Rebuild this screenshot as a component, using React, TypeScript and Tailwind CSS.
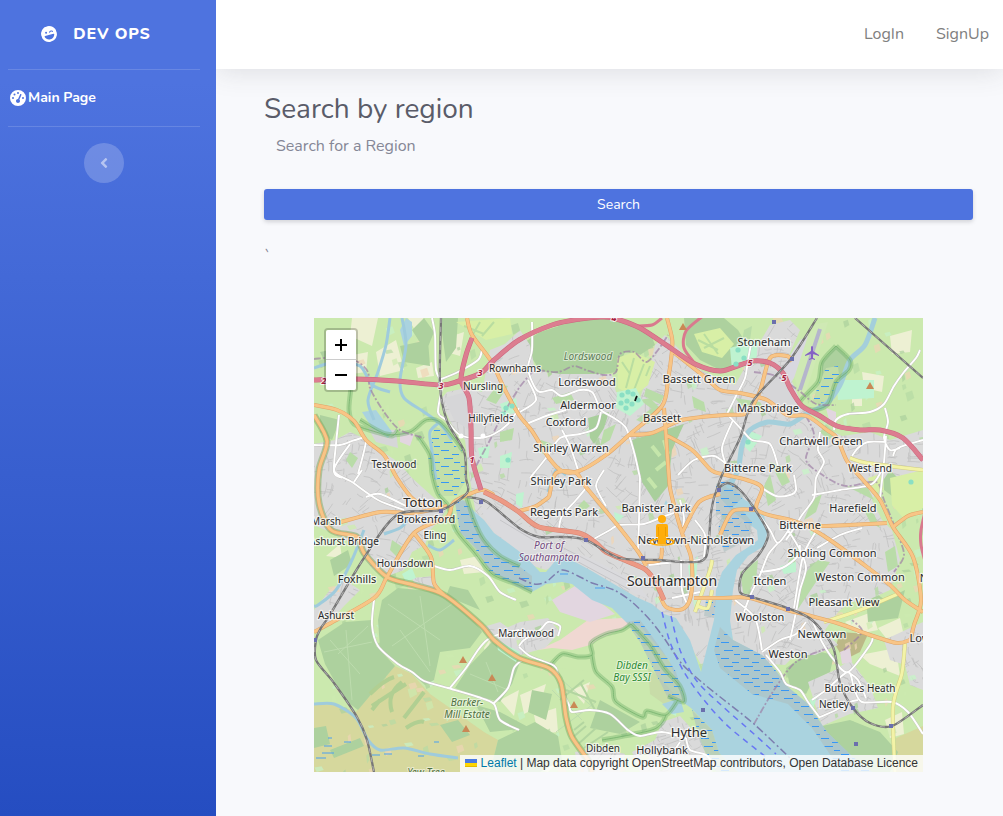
import React from "react";
import { FaAngleLeft } from "react-icons/fa";
import { FaFaceLaughWink, FaGaugeHigh } from "react-icons/fa6";

type Point = [number, number];

const parse = (s: string): Point[] =>
  s.split(" ").map((p) => p.split(",").map(Number) as Point);

const poly = (s: string) => "M" + s.split(" ").join("L") + "Z";

/* Turns a list of points into a smooth open curve. */
const curve = (s: string) => {
  const p = parse(s);
  let d = `M${p[0][0]},${p[0][1]}`;
  for (let i = 0; i < p.length - 1; i++) {
    const a = p[i - 1] ?? p[i];
    const b = p[i];
    const c = p[i + 1];
    const e = p[i + 2] ?? c;
    d += `C${b[0] + (c[0] - a[0]) / 7},${b[1] + (c[1] - a[1]) / 7} ${c[0] - (e[0] - b[0]) / 7},${c[1] - (e[1] - b[1]) / 7} ${c[0]},${c[1]}`;
  }
  return d;
};

const random = (seed: number) => () => {
  seed = (seed * 16807) % 2147483647;
  return seed / 2147483647;
};

const urban = [
  "314,444 335,440 350,432 368,440 380,450 398,462 412,478 432,496 447,508 440,520 430,530 425,545 412,552 404,570 385,577 372,568 355,545 330,532 314,525",
  "314,610 330,590 345,580 360,590 345,605 327,625 314,630",
  "440,400 447,392 466,388 482,392 490,350 505,344 520,330 530,345 535,370 560,374 612,374 616,392 640,398 648,375 655,345 665,335 680,350 700,370 735,385 748,362 770,325 790,320 800,330 785,365 800,400 812,418 830,430 842,436 870,432 890,440 923,430 923,475 900,480 890,470 880,485 872,500 882,520 892,530 900,560 890,590 868,600 850,602 838,612 825,630 838,645 815,655 795,655 785,665 770,664 750,650 733,640 728,618 712,680 703,668 690,645 676,620 660,618 645,608 600,580 560,562 546,570 520,562 500,555 485,542 476,515 470,480 465,440 452,425",
  "808,682 835,670 850,660 870,686 878,708 850,714 822,726",
  "655,740 662,722 680,716 700,738 712,772 640,772 632,752",
  "497,632 520,622 548,618 560,632 545,648 520,655 502,645",
  "480,628 500,622 520,636 510,645 495,642",
  "575,752 600,748 625,754 620,772 578,772",
  "884,640 923,622 923,690 910,685 905,665 890,660",
  "412,578 434,576 440,592 416,588",
];

const woods = [
  "519,346 540,332 585,318 618,318 650,332 655,345 640,355 625,352 617,372 590,376 560,374 542,374 530,355",
  "684,318 724,318 738,330 750,350 745,362 720,370 700,360 686,345",
  "632,440 684,424 672,450 668,486 655,502 642,482",
  "588,418 609,412 604,428 594,444 590,438",
  "318,640 345,622 372,620 376,646 395,666 358,710 345,700 325,664",
  "378,620 382,600 398,588 440,592 468,612 482,632 470,648 440,652 434,680 425,685 410,672 395,662 380,648",
  "492,642 520,662 512,684 500,702 476,696 455,688 470,665",
  "400,346 428,340 430,366 404,362",
  "412,330 424,318 434,332 426,352",
  "320,352 340,348 350,366 330,372",
  "458,318 440,318 446,362 456,348",
  "884,470 923,476 920,494 900,502 884,490",
  "822,362 836,346 850,360 840,385 822,388",
  "330,560 348,550 352,564 334,576",
  "480,610 468,590 450,586 446,596",
  "786,668 812,650 834,655 830,672 812,682 806,694 790,686",
  "800,714 822,726 850,720 880,732 898,752 890,772 864,772 830,736",
  "498,740 535,722 558,736 562,760 540,772 490,772",
  "440,725 458,720 470,735 452,742",
  "314,728 326,726 330,744 314,748",
  "330,750 360,738 364,746 334,758",
  "532,690 552,694 546,720 528,712",
  "865,585 885,600 905,590 898,618 868,622",
  "600,700 640,722 620,734 590,728",
  "320,415 340,420 332,440 320,432",
  "476,705 500,712 530,728 490,732",
];

const urbanGreens = [
  "636,420 652,408 660,412 648,424",
  "640,400 650,398 662,410 656,412",
  "744,330 752,326 750,340 742,342",
  "735,398 760,402 766,412 742,406",
  "770,462 782,466 790,482 782,486",
  "770,474 776,500 768,506 764,486",
  "804,520 812,500 822,494 816,512",
  "800,545 796,560 790,572 788,562",
  "806,572 818,560 830,562 816,582 804,600 796,612 800,590",
  "740,572 758,560 756,580 744,598",
  "846,486 868,488 874,500 862,494",
  "862,506 874,514 880,528 870,522",
  "552,398 570,392 574,400 556,404",
  "604,430 616,424 610,440 600,446",
  "541,440 552,444 546,456 538,450",
  "646,388 664,396 660,404 644,396",
  "692,396 704,402 706,412 694,408",
  "578,506 584,500 590,506 582,512",
  "486,400 498,384 508,386 496,404",
  "500,432 514,428 512,440 500,442",
  "392,540 404,548 398,558 390,550",
  "350,452 358,458 352,468 346,460",
  "654,576 660,578 658,592 654,590",
  "885,552 895,546 898,566 888,572",
  "820,432 826,424 836,434 828,440",
];

const fields = [
  "352,318 378,318 372,346 350,336",
  "376,352 396,340 404,370 380,376",
  "408,318 424,318 416,332",
  "348,356 368,352 366,372 352,374",
  "446,338 464,332 460,356 446,352",
  "520,695 546,684 540,706 524,714",
  "534,715 556,708 558,732 538,734",
  "500,700 519,690 514,716",
  "572,690 590,682 584,704",
  "460,560 478,556 484,572 464,574",
  "878,628 900,618 904,636 886,638",
  "845,622 872,612 878,630 858,634",
  "860,655 896,648 900,676 870,664",
  "885,720 902,712 904,734 890,738",
  "852,398 862,392 862,406 852,406",
  "484,648 492,636 486,654",
  "862,372 884,376 882,392 864,388",
  "890,336 912,330 910,352 892,354",
  "326,556 340,544 342,558",
  "520,766 545,748 560,760 548,772",
  "416,368 432,362 434,376 418,378",
  "630,685 648,690 640,700 626,696",
];

const brightGreen = [
  "617,358 634,352 655,362 648,385 634,396 618,388",
  "694,334 720,328 734,344 722,358 702,352",
  "890,478 923,470 923,508 905,520 892,505",
  "868,478 880,474 884,490 872,494",
  "456,322 510,318 512,334 486,340",
];

const mint = [
  "617,392 636,388 644,404 630,416 616,408",
  "730,348 758,340 756,364 732,370",
  "836,380 874,380 874,398 838,400",
  "500,404 516,398 518,412 504,416",
  "478,448 490,446 488,458 480,458",
  "500,456 512,452 510,468 500,468",
  "748,430 762,436 750,452 742,444",
  "496,640 520,652 516,662 498,650",
  "780,566 796,562 796,572 784,574",
  "614,512 624,516 616,524",
  "402,574 412,568 416,578 406,582",
  "516,494 524,492 522,508 516,504",
  "810,700 818,694 812,712",
  "668,712 678,700 676,716",
  "688,566 698,556 696,578 690,580",
];

const industrial = [
  "552,600 575,586 605,606 615,614 590,622 560,612",
  "836,412 826,408 830,424 836,422",
  "400,432 414,434 410,446 400,442",
  "840,652 850,648 852,662 842,664",
];

const commercial = [
  "444,398 466,392 469,430 454,420",
  "368,428 396,430 398,448 376,442",
  "762,370 782,372 798,398 786,412 764,404",
];

const water = [
  "476,513 484,520 494,533 508,543 524,555 540,572 546,572 556,560 566,557 590,570 636,597 652,604 664,614 676,618 690,640 701,672 714,620 716,590 722,572 736,555 750,546 758,540 757,530 745,521 733,512 720,498 722,484 733,488 745,500 757,506 764,516 768,530 764,546 748,556 737,570 733,590 730,620 733,640 762,655 777,672 788,687 807,703 827,732 853,757 872,772 738,772 719,753 712,730 691,708 684,703 669,660 640,626 626,622 612,608 592,600 572,584 562,582 546,584 532,592 516,586 490,570 476,548 460,532 455,502 463,500",
  "406,318 412,322 412,336 404,346 400,330",
  "362,412 376,410 392,432 388,438 372,428",
  "662,704 680,698 684,712 672,714",
  "668,504 664,505 666,500",
];

const marsh = [
  "455,502 466,500 474,520 484,540 496,556 519,566 532,576 532,592 516,586 490,572 476,550 460,532",
  "434,426 446,432 454,445 464,452 466,480 456,496 440,496 428,462",
  "626,622 640,620 662,650 676,672 685,702 668,698 654,670 640,642",
  "692,710 712,730 719,753 738,772 716,772 700,742",
  "720,627 733,640 762,655 777,672 788,687 807,703 827,732 853,757 872,772 842,772 812,728 788,704 752,694 720,668 714,650",
  "724,505 742,510 752,522 750,538 736,546 724,552 718,530",
  "716,484 732,478 744,496 732,508 716,516",
  "826,368 838,366 840,384 830,394 826,402 812,404 818,386",
  "706,600 716,598 714,618 704,616",
];

const whiteRoads = [
  "432,318 435,335 436,370 442,385 438,412 446,420 460,435 480,438 494,434 508,424 519,408",
  "439,380 458,372 478,360 482,350",
  "314,445 340,445 355,440 366,440 358,474",
  "339,415 336,444 334,472 342,478",
  "350,444 334,470 352,482 378,500 404,510",
  "366,497 380,494 406,506",
  "354,482 362,470",
  "434,566 450,570 470,566 488,576 500,592 516,600",
  "374,600 372,625 378,646 398,664 412,672 424,681 448,688 478,697 494,704 500,720 519,730",
  "450,688 466,668 478,650 487,640 500,634 519,630",
  "494,703 508,688 514,668 522,660",
  "519,646 524,640 540,630 548,622 560,626 558,636",
  "519,647 530,656 548,663 556,668 562,690 569,705 572,712 590,710 610,714 628,730 640,736 662,732 686,738",
  "532,322 532,350 528,368 534,386 540,392 552,390 562,396 580,390 592,392 598,404 602,411 614,418 626,428 634,452 640,478",
  "520,412 536,400 528,380",
  "524,425 546,416 566,410",
  "601,412 596,428 580,434 560,438 546,458 530,478",
  "562,430 570,446 578,470",
  "640,478 639,520 638,550",
  "559,528 562,516 576,500 586,488",
  "592,540 610,530 619,525 644,524 665,516 676,512",
  "678,475 694,460 714,456 726,464",
  "695,520 705,535 704,557",
  "680,500 684,518 682,534",
  "604,470 596,486 606,506",
  "649,565 676,562 700,560",
  "681,560 682,590 688,606",
  "672,598 700,592",
  "751,344 748,360 745,378 736,396 727,414",
  "727,414 742,430 752,440 770,444 778,466",
  "733,420 722,448 728,470",
  "834,430 836,420 848,414 870,412 884,404 894,386 904,372 916,358 920,350",
  "885,408 888,422 884,438 890,450 900,448",
  "852,456 858,448 868,442 886,442",
  "893,456 898,448 923,440",
  "820,432 818,450 824,462 816,478 814,498 802,515 794,528 786,540",
  "812,495 840,490 872,484 884,465",
  "762,488 776,496 790,495 796,490 794,475",
  "757,512 770,530 778,543 790,528",
  "778,543 768,555 760,575 750,596 744,612",
  "760,572 782,568 798,556 800,545",
  "788,530 800,550 806,568 800,590 796,612 790,640",
  "818,528 808,545 802,560 794,608",
  "817,548 840,535 862,528",
  "886,436 884,462 880,498",
  "735,600 755,618 762,650",
  "762,652 780,640 796,634 806,622",
  "766,655 780,672 786,684 800,690 808,702 820,718",
  "812,620 822,642 834,660 848,672 870,645 873,636",
  "812,700 826,690 848,672 854,688 862,702 892,702 908,712 923,734",
  "820,717 836,710 850,702 858,700",
  "848,672 858,680 866,698",
  "686,738 690,750 706,755 716,768",
  "680,742 668,760",
];

const primaryRoads = [
  "467,318 472,335 491,361 504,388 519,415 532,431 549,458 562,471 579,471 606,455 629,435 662,406 668,380 672,351 672,338 667,318",
  "629,435 652,433 682,420 724,415 747,413 760,391 770,358 787,356 792,361",
  "664,408 666,435 669,478 671,493 682,533 691,557 692,587 688,604 679,610 666,607 660,596",
  "666,435 692,450 711,470 722,474 747,480 762,488 757,510 790,520 805,525 830,540 867,567 890,585 905,600 923,612",
  "672,351 706,378 720,390 740,393 767,400 787,415 807,416 827,430 837,438 847,461 863,480 880,500 893,527 913,557 921,600 914,625 910,642",
  "893,527 908,516 923,512",
  "803,524 820,526 887,523",
  "682,533 699,502 720,494",
  "720,535 733,511 757,510",
  "694,598 720,598 750,598 787,610 807,615 840,624 870,635 897,643 910,640",
  "549,497 556,473 576,473 586,487 619,527 639,553 646,566",
  "519,511 536,506 549,497",
  "314,405 337,410 354,421 366,440 384,455 397,478 411,497 424,507",
  "314,415 327,441 319,470 319,503 331,530 357,537 364,553 387,577 414,585 444,595 481,625 494,640 519,658 549,668 561,683 566,717 572,737 588,760 592,772",
  "314,632 327,625 374,598 387,577 414,533 447,517 454,502 481,490 494,495",
  "341,522 381,512 414,513 447,506",
  "414,533 431,557 434,583 444,595",
  "646,562 660,560 662,548",
];

const secondaryRoads = [
  "905,643 902,673 893,707 895,772",
  "824,622 860,610 900,593",
  "850,458 867,463 923,470",
  "695,612 710,570 712,560",
  "697,606 708,608 712,590",
];

const trunkRoads = [
  "484,492 502,501 519,512 539,527 579,533 596,543 606,552 629,562 646,570 656,583 664,600",
];

const motorways = [
  "314,380 354,379 397,381 441,385 459,381 481,373 494,360 519,340 552,325 580,319 600,317 613,318 640,328 672,349 695,364 720,371 740,365 753,361 770,363 783,373 790,388 802,406 820,416 837,426 860,430 880,430 903,438 923,460",
  "472,338 466,355 461,380 469,398 471,428 472,458 481,490",
];

const motorwayLinks = [
  "703,316 686,331 684,348 696,365",
  "662,318 652,325 636,326",
  "926,508 921,530 921,545 926,565",
];

const railways = [
  "441,318 440,385 447,421 464,451 466,478 467,493 441,510 397,515 364,558 331,613 321,628 316,640 316,660 334,683 357,717 367,740 374,772",
  "467,497 487,502 519,528 539,537 562,537 586,540 619,558 659,560 686,562 706,557 711,513 716,492 727,483 740,490 754,508 767,530 767,540 758,556 742,574 740,592 752,597 787,608 812,620 833,647 840,683 853,708 870,723 892,726 923,705",
  "817,318 790,360 753,401 740,438 722,475 716,492",
  "855,318 923,378",
];

const streams = [
  "390,318 386,345 378,372 368,400 374,420",
  "402,318 406,345 400,380 404,398 424,412 440,424 452,440",
  "314,368 335,362 360,366 372,385 390,392",
  "440,422 430,432 432,452 436,480",
  "875,318 865,345 850,360 840,385 826,404 806,414 790,424 768,422 750,430 742,446 738,470 728,488",
  "314,704 334,704 356,718 368,740 380,750 404,748 430,754 458,758",
  "364,530 352,560 336,590 318,605 314,606",
  "384,534 400,528 408,520",
  "428,545 440,550 454,540",
  "566,475 556,470 548,492",
];

const reserves = [
  "351,388 349,410 354,424 376,432 392,436 398,430",
  "360,420 386,434 410,432 426,420 440,422 454,438 464,452",
  "418,436 430,455 432,474 438,494 448,506 456,530 474,552 492,574 516,584 532,592",
  "466,495 474,520 484,540 500,556 520,566",
  "549,667 562,654 578,657 592,655 591,643 606,634 622,630 631,624",
  "631,624 650,645 664,668 680,686 684,702 668,696",
  "592,655 596,672 612,687 616,702 642,717 647,711 666,715 678,700",
  "666,715 662,723 652,730 619,737 602,740",
  "836,346 822,362 818,382 800,402 812,410 828,404 836,382 849,370 850,360 836,346",
];

const borders = [
  "314,359 340,357 358,362 368,372 370,388 384,412 400,430 424,438",
  "538,370 558,372 574,366 586,370 604,375 616,372 620,354 634,352 646,362 658,350 668,335",
  "476,466 490,440 500,420 519,388 536,368",
  "754,372 776,376 798,390 816,404 836,405",
  "806,416 814,435 806,460 824,476 846,486 876,482 884,500 896,530 904,555 894,572",
  "844,650 862,632 852,620",
  "754,724 774,690 796,662 828,648",
];

const labels: [string, number, number, number][] = [
  ["Stoneham", 764, 346, 11],
  ["Rownhams", 515, 372, 10],
  ["Nursling", 483, 390, 10],
  ["Lordswood", 587, 386, 11],
  ["Bassett Green", 699, 383, 11],
  ["Aldermoor", 588, 409, 11],
  ["Coxford", 566, 426, 11],
  ["Bassett", 662, 422, 11],
  ["Mansbridge", 768, 412, 11],
  ["Hillyfields", 491, 422, 10],
  ["Chartwell Green", 821, 445, 11],
  ["Shirley Warren", 571, 452, 11],
  ["Bitterne Park", 758, 472, 11],
  ["West End", 870, 472, 10],
  ["Testwood", 394, 468, 10],
  ["Shirley Park", 561, 485, 11],
  ["Regents Park", 564, 516, 11],
  ["Totton", 423, 507, 13],
  ["Brokenford", 426, 523, 11],
  ["Banister Park", 656, 512, 11],
  ["Harefield", 853, 512, 11],
  ["Marsh", 326, 525, 10],
  ["Bitterne", 800, 529, 11],
  ["Eling", 435, 539, 10],
  ["Ashurst Bridge", 344, 545, 10],
  ["Newtown-Nicholstown", 696, 544, 11],
  ["Sholing Common", 832, 557, 11],
  ["Hounsdown", 405, 567, 10],
  ["Foxhills", 357, 583, 11],
  ["Southampton", 672, 586, 14],
  ["Itchen", 770, 585, 11],
  ["Weston Common", 860, 581, 11],
  ["Pleasant View", 844, 606, 11],
  ["Ashurst", 336, 619, 10],
  ["Woolston", 760, 621, 11],
  ["Marchwood", 526, 637, 10],
  ["Newtown", 822, 638, 11],
  ["Weston", 788, 658, 11],
  ["Butlocks Heath", 860, 692, 10],
  ["Netley", 834, 708, 10],
  ["Hythe", 689, 737, 13],
  ["Dibden", 603, 752, 10],
  ["Hollybank", 662, 754, 11],
  ["Low", 920, 642, 11],
  ["N", 924, 582, 11],
];

const areaLabels: [string, number, number, string][] = [
  ["Lordswood", 588, 360, "#5c7a55"],
  ["Port of", 549, 549, "#734a7d"],
  ["Southampton", 549, 561, "#734a7d"],
  ["Dibden", 632, 669, "#2c8a34"],
  ["Bay SSSI", 632, 681, "#2c8a34"],
  ["Barker-", 467, 706, "#4f7042"],
  ["Mill Estate", 467, 718, "#4f7042"],
  ["Yew Tree", 426, 776, "#4f7042"],
];

const shields: [string, number, number][] = [
  ["2", 324, 384],
  ["3", 441, 389],
  ["3", 480, 376],
  ["4", 614, 321],
  ["5", 750, 366],
  ["5", 784, 381],
  ["1", 472, 463],
];

const peaks = ["683,326", "870,385", "463,659", "492,677", "466,728", "574,704"];
const stations = ["441,511", "481,502", "586,540", "643,558", "719,490", "751,509", "752,597", "788,609", "774,322", "792,359", "703,710", "853,708", "891,726", "856,744", "315,640"];

const pitches: Point[] = [
  [622, 395], [628, 392], [633, 394], [621, 403], [627, 401], [632, 404], [638, 400], [626, 408],
  [911, 482], [738, 350], [744, 358], [736, 364], [506, 408], [512, 406], [503, 414], [508, 460], [748, 442],
];

const streetGrid = (() => {
  const r = random(71);
  let d = "";
  for (let i = 0; i < 2800; i++) {
    const x = 314 + r() * 609;
    const y = 318 + r() * 454;
    const tilt = Math.sin(x / 63) + Math.cos(y / 47) + (r() > 0.5 ? Math.PI / 2 : 0);
    const len = 5 + r() * 11;
    const bend = (r() - 0.5) * 5;
    const dx = Math.cos(tilt) * len;
    const dy = Math.sin(tilt) * len;
    d += `M${x.toFixed(1)},${y.toFixed(1)}q${(dx / 2 + bend).toFixed(1)},${(dy / 2 - bend).toFixed(1)} ${dx.toFixed(1)},${dy.toFixed(1)}`;
  }
  return d;
})();

const specks = (() => {
  const r = random(913);
  return Array.from({ length: 620 }, () => {
    const x = 314 + r() * 609;
    const y = 318 + r() * 454;
    const w = 2 + r() * 6;
    const h = 2 + r() * 6;
    const fill = ["#b7dba5", "#c8f2c8", "#add19e", "#cdebb0", "#efd6b6"][Math.floor(r() * 5)];
    return { d: `M${x},${y}l${w},${-h / 3} ${w / 3},${h} ${-w},${h / 2}Z`, fill };
  });
})();

const Areas = ({ list, fill, opacity = 1 }: { list: string[]; fill: string; opacity?: number }) => (
  <path d={list.map(poly).join("")} fill={fill} opacity={opacity} />
);

const Lines = ({ list, stroke, width, dash, opacity = 1 }: { list: string[]; stroke: string; width: number; dash?: string; opacity?: number }) => (
  <path d={list.map(curve).join("")} fill="none" stroke={stroke} strokeWidth={width} strokeDasharray={dash} strokeLinejoin="round" opacity={opacity} />
);

function MapDrawing() {
  return (
    <svg viewBox="314 318 609 454" preserveAspectRatio="xMidYMid slice" className="block h-full w-full" role="img" aria-label="Map of Southampton">
      <defs>
        <clipPath id="built">
          <path d={urban.map(poly).join("")} />
        </clipPath>
        <pattern id="reeds" width="20" height="16" patternUnits="userSpaceOnUse">
          <g fill="#3797f5">
            <rect x="1" y="2" width="8" height="1" />
            <rect x="12" y="6" width="7" height="1" />
            <rect x="4" y="10" width="9" height="1" />
            <rect x="14" y="14" width="6" height="1" />
          </g>
        </pattern>
      </defs>
      <rect x="314" y="318" width="609" height="454" fill="#cbe9ae" />
      <Areas list={["314,705 336,704 356,712 376,688 395,666 412,674 430,694 450,708 484,732 498,740 490,772 314,772"]} fill="#d6d89d" />
      <Areas list={["896,738 923,726 923,772 896,772"]} fill="#d6d89d" />
      <Areas list={["840,632 868,634 860,652 844,660 836,646"]} fill="#bcb887" />
      <Areas list={fields} fill="#edf0d3" />
      <g opacity="0.7">
        {specks.map((s, i) => (
          <path key={i} d={s.d} fill={s.fill} />
        ))}
      </g>
      <Areas list={woods} fill="#add19e" />
      <Areas list={["549,667 562,655 592,655 591,643 622,630 631,625 668,696 678,700 666,715 642,717 616,702 596,672"]} fill="#cbe9ae" />
      <Areas list={["648,668 656,674 678,698 664,704 650,694"]} fill="#c8dca8" />
      <Areas list={["538,650 560,640 588,620 622,618 632,622 620,630 600,638 590,645 572,650 552,648"]} fill="#f0d8d2" />
      <path d="M338 654l30-28M330 640l30 34M346 630l6 70M324 652l48-10M388 604l52 36M392 646l60-42M400 630l30 42M420 596l10 70M470 674l38 16M486 662l12 30M552 690l30 30M562 680l34 30M596 702l-40 30" stroke="#bddcae" strokeWidth="1" />
      <path d="M370 694q14-14 24-17M372 706q18-12 34-22M392 712q-6-18 10-30M404 718q14-18 20-26M406 728q12-8 18-6M380 700l-8 10" stroke="#b1cf92" strokeWidth="4" fill="none" />
      <path d="M572 738l14-12M576 746l20-18M584 748l24-16M574 730l10-8M566 690l30 12M560 700l24-20M596 712l-16-30" stroke="#b2d5a0" strokeWidth="2" fill="none" />
      <Areas list={urban} fill="#dadada" />
      <g clipPath="url(#built)">
        <path d={streetGrid} fill="none" stroke="#bebebe" strokeWidth="0.7" />
        {specks.map((s, i) => (i % 3 === 0 ? <path key={i} d={s.d} fill={s.fill} opacity="0.8" /> : null))}
      </g>
      <Areas list={urbanGreens} fill="#b9dca8" />
      <Areas list={[woods[2], woods[3]]} fill="#a9cf9c" />
      <path d="M652 446l8 10M656 470l10-8M648 478l8 10M664 440l4 14" stroke="#c5e6ab" strokeWidth="4" />
      <Areas list={brightGreen} fill="#d8efa6" />
      <path d="M622 362l8 12M634 358l-8 30M644 364l-10 26M650 366l-4 10M698 340l20 10M704 334l14 20M724 338l-20 10M464 326l20 8M480 322l-8 14M494 322l-12 14" stroke="#b9dda0" strokeWidth="2" />
      <Areas list={mint} fill="#bff3d0" />
      <Areas list={industrial} fill="#e2d6e0" />
      <Areas list={commercial} fill="#d6d6d8" />
      <Areas list={["480,508 500,512 546,544 590,558 636,582 650,600 636,594 566,555 546,568 520,552 494,532"]} fill="#dadadd" />
      <path d="M540 536l90 46M560 552l70 38M500 520l40 24" stroke="#c5c5c8" strokeWidth="1" />
      <Areas list={["790,362 806,338 816,324 828,322 806,392 800,396"]} fill="#cfe9b4" />
      <Areas list={["782,368 800,340 808,336 794,378 790,384"]} fill="#d9d8e0" />
      <Areas list={water} fill="#aad3df" />
      <Areas list={marsh} fill="#aebfc0" opacity={0.6} />
      <Areas list={[marsh[1], marsh[7]]} fill="#c5e2a5" opacity={0.8} />
      <Areas list={marsh} fill="url(#reeds)" />
      <path d="M418 756h6M434 742h5M322 753h12M324 746h8M344 742h7M316 758h10M372 755h8M384 754h8M328 738h4M560 574h8M595 588h10" stroke="#4a9ff0" strokeWidth="1.2" fill="none" />
      <Lines list={streams} stroke="#9fcbdc" width={3} />
      <Lines list={streams.slice(4, 5)} stroke="#a4cfdb" width={5} />
      <Lines list={reserves} stroke="#6dae68" width={5} opacity={0.4} />
      <Lines list={reserves} stroke="#6dae68" width={1} opacity={0.7} />
      <Lines list={borders} stroke="#9b7ba3" width={1.8} dash="7 2 2 2" opacity={0.65} />
      <Lines list={["519,578 534,584 546,582 562,570 580,577 592,583 614,590 632,602 650,620 664,638 682,664 704,684 724,700 754,724 790,758"]} stroke="#7d7eaf" width={1.5} dash="8 3 2 3" />
      <Lines list={["662,612 670,642 684,672 704,700 730,728 780,768", "671,616 680,650 696,680 720,704 754,734 776,754"]} stroke="#6877f3" width={1.5} dash="6 5" />
      <Lines list={whiteRoads} stroke="#c3c1be" width={2.6} />
      <Lines list={whiteRoads} stroke="#ffffff" width={1.9} />
      <Lines list={secondaryRoads} stroke="#d0cc83" width={4} />
      <Lines list={secondaryRoads} stroke="#f3f3a7" width={3} />
      <Lines list={[primaryRoads[13]]} stroke="#85ad64" width={7} opacity={0.55} />
      <Lines list={primaryRoads} stroke="#dfa468" width={4} />
      <Lines list={primaryRoads} stroke="#f8c586" width={3} />
      <Lines list={trunkRoads} stroke="#d38170" width={5} />
      <Lines list={trunkRoads} stroke="#ec9a85" width={4} />
      <Lines list={motorwayLinks} stroke="#d97a8e" width={3} />
      <Lines list={motorways} stroke="#cb677f" width={5} />
      <Lines list={motorways} stroke="#dc7d90" width={4} />
      <Lines list={railways} stroke="#777777" width={2.3} />
      <Lines list={railways} stroke="#bdbdbd" width={0.8} dash="5 4" />
      <path d="M820 329L800 390" stroke="#b5b5cc" strokeWidth="4" />
      <path d="M812 346c1 0 1 1 1 2v3l6 4v1l-6-2v4l2 1v1l-3-1-3 1v-1l2-1v-4l-6 2v-1l6-4v-3c0-1 0-2 1-2Z" fill="#8461c4" />
      {pitches.map(([x, y]) => (
        <circle key={`${x}-${y}`} cx={x} cy={y} r="2.6" fill="#8adfc4" />
      ))}
      <path d="M637 396l-1 2-1 3" stroke="#111" strokeWidth="1.8" fill="none" />
      <g fill="#c98855">
        {peaks.map((p) => {
          const [x, y] = p.split(",").map(Number);
          return <path key={p} d={`M${x} ${y - 3}l4 7h-8Z`} />;
        })}
      </g>
      {stations.map((p) => {
        const [x, y] = p.split(",").map(Number);
        return <rect key={p} x={x - 2} y={y - 2} width="4" height="4" fill="#6b6fad" />;
      })}
      <circle cx="461" cy="436" r="2.5" fill="#fff" />
      <circle cx="483" cy="436" r="2.5" fill="#fff" />
      <g textAnchor="middle" fontFamily="'Noto Sans', sans-serif" paintOrder="stroke" strokeLinejoin="round">
        {shields.map(([t, x, y]) => (
          <text key={`${t}${x}`} x={x} y={y} fontSize="9" fontWeight="700" fontStyle="italic" fill="#a6203f" stroke="#fff" strokeWidth="2" strokeOpacity="0.8">{t}</text>
        ))}
        {areaLabels.map(([t, x, y, fill]) => (
          <text key={`${t}${y}`} x={x} y={y} fontSize="10" fontStyle="italic" fill={fill} stroke="#fff" strokeWidth="2" strokeOpacity="0.5">{t}</text>
        ))}
        {labels.map(([t, x, y, size]) => (
          <text key={`${t}${y}`} x={x} y={y} fontSize={size} fill="#2b2b2b" stroke="#fff" strokeWidth="2.5" strokeOpacity="0.65">{t}</text>
        ))}
      </g>
      <g fill="#ffad0a">
        <ellipse cx="662" cy="542" rx="12" ry="3" fill="none" stroke="#ffad0a" strokeWidth="1.5" />
        <circle cx="662" cy="519" r="4" />
        <path d="M658 524h8q2 0 2 3v10h-2v7h-8v-7h-2v-10q0-3 2-3Z" />
      </g>
      <path d="M658.5 527v9M665.5 527v9" stroke="#e89a00" strokeWidth="0.8" />
    </svg>
  );
}

function Sidebar() {
  return (
    <nav className="relative z-10 flex w-54 shrink-0 flex-col bg-linear-to-b from-[#4e73df] from-10% to-[#254dc1] pr-4 pl-2 text-white">
      <a href="#home" className="flex h-[69px] items-center justify-center gap-4 pr-4 pb-[2px] text-base font-extrabold tracking-wider">
        <FaFaceLaughWink className="-rotate-15" />
        DEV OPS
      </a>
      <hr className="border-white/15" />
      <a href="#main" className="flex h-14 items-center gap-[2px] pl-[2px] text-sm font-bold">
        <FaGaugeHigh className="size-4" />
        Main Page
      </a>
      <hr className="border-white/15" />
      <button type="button" aria-label="Collapse sidebar" className="mt-4 flex size-10 items-center justify-center self-center rounded-full bg-white/20 text-white/50">
        <FaAngleLeft className="size-4" />
      </button>
    </nav>
  );
}

export default function App() {
  return (
    <div className="flex min-h-screen bg-[#f8f9fc] font-[Nunito,Lato,sans-serif] text-[#858796]">
      <Sidebar />
      <div className="flex min-w-0 flex-1 flex-col">
        <header className="flex h-[69px] items-center justify-end gap-8 bg-white pr-[14px] pb-[2px] text-base text-[#808080] shadow-[0_2px_28px_rgba(58,59,69,0.15)]">
          <a href="#login">LogIn</a>
          <a href="#signup">SignUp</a>
        </header>
        <main className="flex flex-col pt-6 pr-[30px] pb-11 pl-12">
          <form className="flex flex-col" onSubmit={(e) => e.preventDefault()}>
            <label htmlFor="region" className="text-[28px] leading-8 text-[#5a5c69]">Search by region</label>
            <input id="region" type="text" placeholder="Search for a Region" className="h-[42px] bg-transparent px-3 text-base placeholder:text-[#858796]" />
            <button type="submit" className="mt-[22px] h-[31px] rounded-[3px] bg-[#4e73df] text-sm text-white shadow-[0_2px_4px_rgba(58,59,69,0.2)]">Search</button>
          </form>
          <p className="mt-6 text-base leading-6">`</p>
          <section className="relative mx-[50px] mt-[50px] h-[454px] overflow-hidden">
            <MapDrawing />
            <div className="absolute top-[10px] left-[10px] flex flex-col rounded-sm border-2 border-black/20 bg-clip-padding text-black">
              <button type="button" aria-label="Zoom in" className="flex h-[30px] w-[30px] items-center justify-center rounded-t-[2px] border-b border-[#ccc] bg-white">
                <svg viewBox="0 0 12 12" className="size-3"><path d="M6 0v12M0 6h12" stroke="currentColor" strokeWidth="2" /></svg>
              </button>
              <button type="button" aria-label="Zoom out" className="flex h-[30px] w-[30px] items-center justify-center rounded-b-[2px] bg-white">
                <svg viewBox="0 0 12 12" className="size-3"><path d="M0 6h12" stroke="currentColor" strokeWidth="2" /></svg>
              </button>
            </div>
            <div className="absolute right-0 bottom-0 bg-white/80 px-[5px] font-['Liberation_Sans',sans-serif] text-xs leading-[17px] whitespace-nowrap text-[#333]">
              <a href="#leaflet" className="text-[#0078a8]">
                <svg viewBox="0 0 12 8" className="mr-1 inline h-2 w-3 align-baseline">
                  <path fill="#4c7be1" d="M0 0h12v4H0z" />
                  <path fill="#ffd500" d="M0 4h12v3H0z" />
                  <path fill="#e0bc00" d="M0 7h12v1H0z" />
                </svg>
                Leaflet
              </a>{" "}
              | Map data copyright OpenStreetMap contributors, Open Database Licence
            </div>
          </section>
        </main>
      </div>
    </div>
  );
}
